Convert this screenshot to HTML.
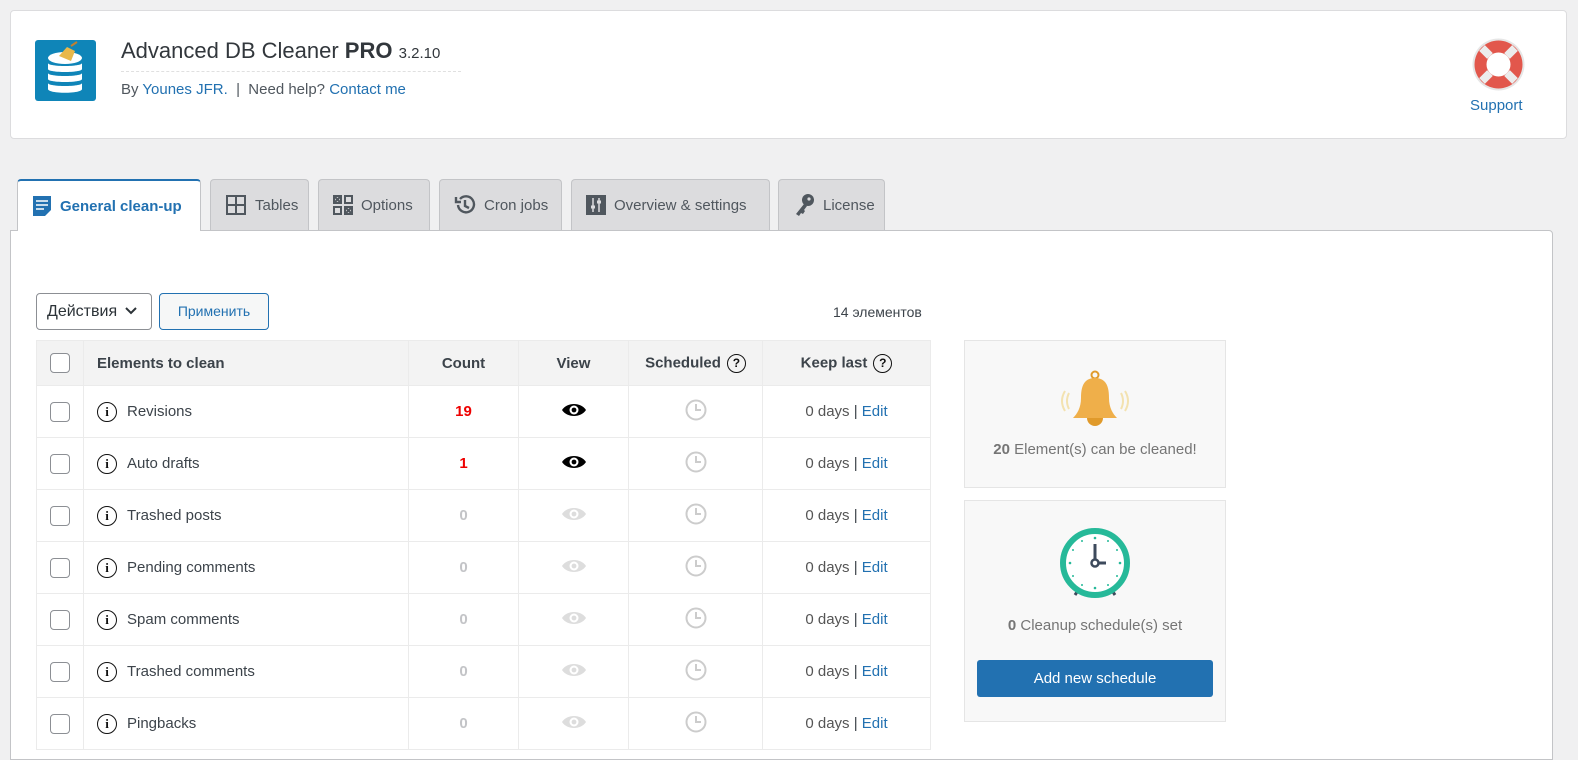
<!DOCTYPE html>
<html><head><meta charset="utf-8"><style>
*{box-sizing:border-box;margin:0;padding:0}
body{width:1578px;height:749px;overflow:hidden;background:#f0f0f1;font-family:"Liberation Sans","DejaVu Sans",sans-serif;color:#3c434a;position:relative}
.abs{position:absolute}
a{color:#2271b1;text-decoration:none}
.hdr{left:10px;top:10px;width:1557px;height:129px;background:#fff;border:1px solid #dcdcde;border-radius:4px}
.tab{top:179px;height:51px;background:#dcdcde;border:1px solid #c3c4c7;border-bottom:none;border-radius:4px 4px 0 0;font-size:15px;color:#50575e;display:flex;align-items:center;padding-left:14px;gap:8px}
.tab.on{background:#fff;border-top:2px solid #2271b1;color:#2271b1;font-weight:bold;height:52px;z-index:2}
.panel{left:10px;top:230px;width:1543px;height:530px;background:#fff;border:1px solid #c3c4c7;border-radius:0 4px 0 0}
table{border-collapse:collapse;position:absolute;left:36px;top:340px;width:895px;font-size:15px}
td,th{border:1px solid #ebebeb;height:52px;text-align:center}
th{height:45px;background:#f3f3f3;font-weight:bold;color:#3c434a;font-size:15px}
td.l,th.l{text-align:left;padding-left:13px}
.cb{display:inline-block;width:20px;height:20px;border:1px solid #8c8f94;border-radius:4px;background:#fff;vertical-align:middle}
.info{display:inline-block;width:20px;height:20px;border:1.6px solid #111;border-radius:50%;font:bold 13px "Liberation Serif",serif;text-align:center;line-height:17px;color:#111;vertical-align:middle;margin-right:10px}
.q{display:inline-block;width:19px;height:19px;border:1.6px solid #111;border-radius:50%;font-size:12px;text-align:center;line-height:16px;color:#111;margin-left:6px;vertical-align:middle}
.red{color:#e00;font-weight:bold}.gr{color:#c3c4c7;font-weight:bold}
.side{background:#f8f8f8;border:1px solid #e5e5e5;left:964px;width:262px;text-align:center;color:#757575;font-size:15px}
</style></head><body>
<div class="abs hdr"></div>
<svg class="abs" style="left:35px;top:40px" width="61" height="61" viewBox="0 0 61 61"><rect width="61" height="61" rx="3" fill="#0f85b8"/>
<ellipse cx="30" cy="18" rx="17" ry="6" fill="#fff"/><path d="M13 23v6c0 4 34 4 34 0v-6c0 4-34 4-34 0z" fill="#fff"/><path d="M13 33v6c0 4 34 4 34 0v-6c0 4-34 4-34 0z" fill="#fff"/><path d="M13 43v6c0 5 34 5 34 0v-6c0 4-34 4-34 0z" fill="#fff"/>
<path d="M24 16l8-9 8 4-4 10z" fill="#e8b84a"/><path d="M36 6l6-4" stroke="#c08030" stroke-width="2"/></svg>
<div class="abs" style="left:121px;top:38px;font-size:22px;color:#32373c">Advanced DB Cleaner <b>PRO</b> <span style="font-size:15px">3.2.10</span></div>
<div class="abs" style="left:121px;top:71px;width:340px;border-top:1px dashed #e0e0e0"></div>
<div class="abs" style="left:121px;top:81px;font-size:15px;color:#50575e">By <a>Younes JFR.</a> &nbsp;| &nbsp;Need help? <a>Contact me</a></div>
<svg class="abs" style="left:1472px;top:38px" width="53" height="53" viewBox="0 0 53 53"><circle cx="26.5" cy="26.5" r="26" fill="#e6e6e6"/><circle cx="26.5" cy="26.5" r="24" fill="#e2574c"/><circle cx="26.5" cy="26.5" r="12" fill="#fff"/>
<g stroke="#ececec" stroke-width="8"><path d="M10 10l8 8M43 10l-8 8M10 43l8-8M43 43l-8-8"/></g></svg>
<div class="abs" style="left:1470px;top:97px;font-size:15px;color:#2271b1">Support</div>

<div class="abs tab on" style="left:17px;width:184px"><svg width="20" height="22" viewBox="0 0 20 22"><path d="M1 1h18v14l-6 6H1z" fill="#2271b1"/><path d="M4 6h12M4 10h12M4 14h8" stroke="#fff" stroke-width="1.6"/></svg>General clean-up</div>
<div class="abs tab" style="left:210px;width:99px"><svg width="22" height="22"><rect x="1" y="1" width="20" height="20" fill="#50575e"/><path d="M3 3h7v7H3zM12 3h7v7h-7zM3 12h7v7H3zM12 12h7v7h-7z" fill="#dcdcde"/></svg>Tables</div>
<div class="abs tab" style="left:318px;width:112px"><svg width="20" height="20" fill="none" stroke="#50575e" stroke-width="2"><rect x="1" y="1" width="7" height="7"/><rect x="12" y="1" width="7" height="7"/><rect x="1" y="12" width="7" height="7"/><rect x="12" y="12" width="7" height="7"/><path d="M2 2l5 5M7 2l-5 5M13 13l5 5M18 13l-5 5"/></svg>Options</div>
<div class="abs tab" style="left:439px;width:123px"><svg width="22" height="22" fill="none" stroke="#50575e" stroke-width="2.4"><path d="M4 11a8 8 0 1 0 2-6"/><path d="M2 3v5h5" /><path d="M11 6v6l4 2"/></svg>Cron jobs</div>
<div class="abs tab" style="left:571px;width:199px"><svg width="20" height="20"><rect width="20" height="20" fill="#50575e"/><path d="M7 3v14M13 3v14" stroke="#dcdcde" stroke-width="1.5"/><path d="M5 12h4M11 7h4" stroke="#dcdcde" stroke-width="3"/></svg>Overview &amp; settings</div>
<div class="abs tab" style="left:778px;width:107px"><svg width="22" height="24"><circle cx="15" cy="7" r="6" fill="#50575e"/><path d="M11 11l-8 10 3 2 2-3 2 1 2-3-1-1 3-4z" fill="#50575e"/><circle cx="16" cy="6" r="1.6" fill="#dcdcde"/></svg>License</div>
<div class="abs panel"></div>

<div class="abs" style="left:36px;top:293px;width:116px;height:37px;border:1px solid #8c8f94;border-radius:4px;background:#fff;font-size:16px;color:#2c3338;padding:9px 0 0 10px">Действия <svg width="14" height="10" style="margin-left:2px"><path d="M2 2l5 5 5-5" stroke="#2c3338" stroke-width="2" fill="none"/></svg></div>
<div class="abs" style="left:159px;top:293px;width:110px;height:37px;border:1px solid #2271b1;border-radius:4px;background:#f6f7f7;font-size:14px;color:#2271b1;text-align:center;line-height:35px">Применить</div>
<div class="abs" style="left:833px;top:304px;font-size:14px;color:#3c434a">14 элементов</div>

<table>
<tr><th style="width:47px"><span class="cb"></span></th><th class="l" style="width:325px">Elements to clean</th><th style="width:110px">Count</th><th style="width:110px">View</th><th style="width:134px">Scheduled<span class="q">?</span></th><th>Keep last<span class="q">?</span></th></tr>
</table>
<table style="top:385px">
<colgroup><col style="width:47px"><col style="width:325px"><col style="width:110px"><col style="width:110px"><col style="width:134px"><col></colgroup>
<tr><td><span class="cb"></span></td><td class="l"><span class="info">i</span>Revisions</td><td class="red">19</td><td><svg width="26" height="16" viewBox="0 0 26 16"><path d="M1 8C6 0 20 0 25 8 20 16 6 16 1 8z" fill="#000"/><circle cx="13" cy="8" r="4.5" fill="#fff"/><circle cx="13" cy="8" r="2.4" fill="#000"/></svg></td><td><svg width="22" height="22" fill="none" stroke="#ccc" stroke-width="2"><circle cx="11" cy="11" r="9.5"/><path d="M11 5v6h5"/></svg></td><td><span style="color:#555">0 days</span> | <a>Edit</a></td></tr>
<tr><td><span class="cb"></span></td><td class="l"><span class="info">i</span>Auto drafts</td><td class="red">1</td><td><svg width="26" height="16" viewBox="0 0 26 16"><path d="M1 8C6 0 20 0 25 8 20 16 6 16 1 8z" fill="#000"/><circle cx="13" cy="8" r="4.5" fill="#fff"/><circle cx="13" cy="8" r="2.4" fill="#000"/></svg></td><td><svg width="22" height="22" fill="none" stroke="#ccc" stroke-width="2"><circle cx="11" cy="11" r="9.5"/><path d="M11 5v6h5"/></svg></td><td><span style="color:#555">0 days</span> | <a>Edit</a></td></tr>
<tr><td><span class="cb"></span></td><td class="l"><span class="info">i</span>Trashed posts</td><td class="gr">0</td><td><svg width="26" height="16" viewBox="0 0 26 16"><path d="M1 8C6 0 20 0 25 8 20 16 6 16 1 8z" fill="#ddd"/><circle cx="13" cy="8" r="4.5" fill="#fff"/><circle cx="13" cy="8" r="2.4" fill="#ddd"/></svg></td><td><svg width="22" height="22" fill="none" stroke="#ccc" stroke-width="2"><circle cx="11" cy="11" r="9.5"/><path d="M11 5v6h5"/></svg></td><td><span style="color:#555">0 days</span> | <a>Edit</a></td></tr>
<tr><td><span class="cb"></span></td><td class="l"><span class="info">i</span>Pending comments</td><td class="gr">0</td><td><svg width="26" height="16" viewBox="0 0 26 16"><path d="M1 8C6 0 20 0 25 8 20 16 6 16 1 8z" fill="#ddd"/><circle cx="13" cy="8" r="4.5" fill="#fff"/><circle cx="13" cy="8" r="2.4" fill="#ddd"/></svg></td><td><svg width="22" height="22" fill="none" stroke="#ccc" stroke-width="2"><circle cx="11" cy="11" r="9.5"/><path d="M11 5v6h5"/></svg></td><td><span style="color:#555">0 days</span> | <a>Edit</a></td></tr>
<tr><td><span class="cb"></span></td><td class="l"><span class="info">i</span>Spam comments</td><td class="gr">0</td><td><svg width="26" height="16" viewBox="0 0 26 16"><path d="M1 8C6 0 20 0 25 8 20 16 6 16 1 8z" fill="#ddd"/><circle cx="13" cy="8" r="4.5" fill="#fff"/><circle cx="13" cy="8" r="2.4" fill="#ddd"/></svg></td><td><svg width="22" height="22" fill="none" stroke="#ccc" stroke-width="2"><circle cx="11" cy="11" r="9.5"/><path d="M11 5v6h5"/></svg></td><td><span style="color:#555">0 days</span> | <a>Edit</a></td></tr>
<tr><td><span class="cb"></span></td><td class="l"><span class="info">i</span>Trashed comments</td><td class="gr">0</td><td><svg width="26" height="16" viewBox="0 0 26 16"><path d="M1 8C6 0 20 0 25 8 20 16 6 16 1 8z" fill="#ddd"/><circle cx="13" cy="8" r="4.5" fill="#fff"/><circle cx="13" cy="8" r="2.4" fill="#ddd"/></svg></td><td><svg width="22" height="22" fill="none" stroke="#ccc" stroke-width="2"><circle cx="11" cy="11" r="9.5"/><path d="M11 5v6h5"/></svg></td><td><span style="color:#555">0 days</span> | <a>Edit</a></td></tr>
<tr><td><span class="cb"></span></td><td class="l"><span class="info">i</span>Pingbacks</td><td class="gr">0</td><td><svg width="26" height="16" viewBox="0 0 26 16"><path d="M1 8C6 0 20 0 25 8 20 16 6 16 1 8z" fill="#ddd"/><circle cx="13" cy="8" r="4.5" fill="#fff"/><circle cx="13" cy="8" r="2.4" fill="#ddd"/></svg></td><td><svg width="22" height="22" fill="none" stroke="#ccc" stroke-width="2"><circle cx="11" cy="11" r="9.5"/><path d="M11 5v6h5"/></svg></td><td><span style="color:#555">0 days</span> | <a>Edit</a></td></tr>
</table>

<div class="abs side" style="top:340px;height:148px">
<svg style="margin-top:28px" width="72" height="64" viewBox="0 0 72 64"><path d="M10 24q-4 8 0 16M6 22q-6 10 0 20M62 24q4 8 0 16M66 22q6 10 0 20" stroke="#f3e2b0" stroke-width="2" fill="none"/><circle cx="36" cy="6" r="3.5" fill="none" stroke="#e09a2b" stroke-width="2"/><path d="M36 9c-12 0-14 10-14 20 0 10-4 16-8 20h44c-4-4-8-10-8-20 0-10-2-20-14-20z" fill="#efaf4a"/><path d="M28 49a8 8 0 0 0 16 0z" fill="#e09a2b"/></svg>
<div style="margin-top:4px"><b>20</b> Element(s) can be cleaned!</div></div>
<div class="abs side" style="top:500px;height:222px">
<svg style="margin-top:26px" width="76" height="76" viewBox="0 0 76 76"><path d="M18 68l4-6M58 68l-4-6" stroke="#3d4a5c" stroke-width="3"/><circle cx="38" cy="36" r="32" fill="#fff" stroke="#26b999" stroke-width="6"/><g fill="#26b999"><circle cx="38" cy="11" r="1.3"/><circle cx="38" cy="61" r="1.3"/><circle cx="13" cy="36" r="1.3"/><circle cx="63" cy="36" r="1.3"/><circle cx="25" cy="14" r="1"/><circle cx="51" cy="14" r="1"/><circle cx="25" cy="58" r="1"/><circle cx="51" cy="58" r="1"/><circle cx="16" cy="23" r="1"/><circle cx="60" cy="23" r="1"/><circle cx="16" cy="49" r="1"/><circle cx="60" cy="49" r="1"/></g><path d="M38 17v16M41 36h8" stroke="#3d4a5c" stroke-width="3"/><circle cx="38" cy="36" r="3.5" fill="#fff" stroke="#3d4a5c" stroke-width="2.5"/></svg>
<div style="margin-top:10px"><b>0</b> Cleanup schedule(s) set</div>
<div style="margin:26px auto 0;width:236px;height:37px;background:#2271b1;border-radius:3px;color:#fff;line-height:37px;font-size:15px">Add new schedule</div></div>
</body></html>
